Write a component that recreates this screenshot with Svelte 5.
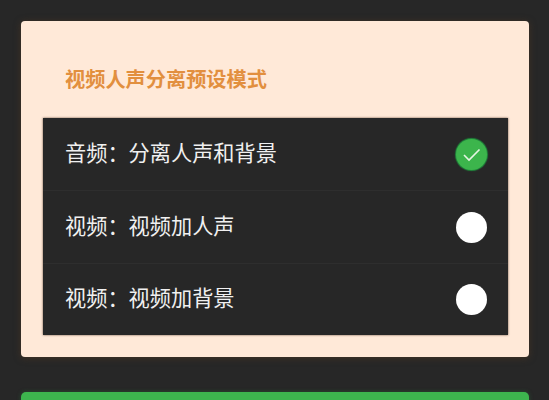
<script>
  const options = [
    { label: '音频：分离人声和背景', checked: true },
    { label: '视频：视频加人声', checked: false },
    { label: '视频：视频加背景', checked: false }
  ];
</script>

<div class="page">
  <section class="card">
    <h2>视频人声分离预设模式</h2>
    <ul class="list">
      {#each options as opt}
        <li class="row">
          <span class="label">{opt.label}</span>
          {#if opt.checked}
            <span class="radio on">
              <svg viewBox="0 0 31 31" width="31" height="31">
                <path d="M8 16 L13 21 L23.5 10.5" fill="none" stroke="#e6f5e4" stroke-width="1.6" />
              </svg>
            </span>
          {:else}
            <span class="radio"></span>
          {/if}
        </li>
      {/each}
    </ul>
  </section>
  <div class="button"></div>
</div>

<style>
  :global(body) {
    margin: 0;
    background: #272727;
    overflow: hidden;
  }

  .page {
    height: 400px;
    box-sizing: border-box;
    padding: 21px 20px 0 21px;
    font-family: "Liberation Sans", "Noto Sans CJK SC", sans-serif;
    overflow: hidden;
  }

  .card {
    height: 336px;
    box-sizing: border-box;
    padding: 0 21px 0 22px;
    background: #ffe9d8;
    border-radius: 4px;
    box-shadow: 0 1px 7px rgba(90, 60, 35, 0.55);
  }

  h2 {
    margin: 0;
    height: 97px;
    box-sizing: border-box;
    padding: 46px 0 0 22px;
    font-size: 20.2px;
    line-height: 26px;
    font-weight: 700;
    color: #e28f3e;
  }

  .list {
    margin: 0;
    padding: 0;
    list-style: none;
    height: 217px;
    background: #272727;
    box-shadow: 0 0 2px rgba(70, 45, 25, 0.8);
  }

  .row {
    height: 73px;
    box-sizing: border-box;
    padding: 0 21px 0 22px;
    display: flex;
    align-items: center;
    justify-content: space-between;
    border-bottom: 1px solid #2e2e2e;
  }

  .row:last-child {
    border-bottom: none;
    height: 71px;
  }

  .label {
    padding-bottom: 6px;
    font-size: 21.2px;
    color: #f0f0f0;
  }

  .radio {
    width: 31px;
    height: 31px;
    border-radius: 50%;
    background: #fff;
  }

  .radio.on {
    background: #3cb54c;
    box-shadow: 0 0 1px 1px #1f8a3c;
  }

  .radio svg {
    display: block;
  }

  .button {
    margin-top: 35px;
    height: 40px;
    background: #3db54e;
    border-radius: 5px;
    box-shadow: 0 0 4px rgba(40, 120, 60, 0.5);
  }
</style>
